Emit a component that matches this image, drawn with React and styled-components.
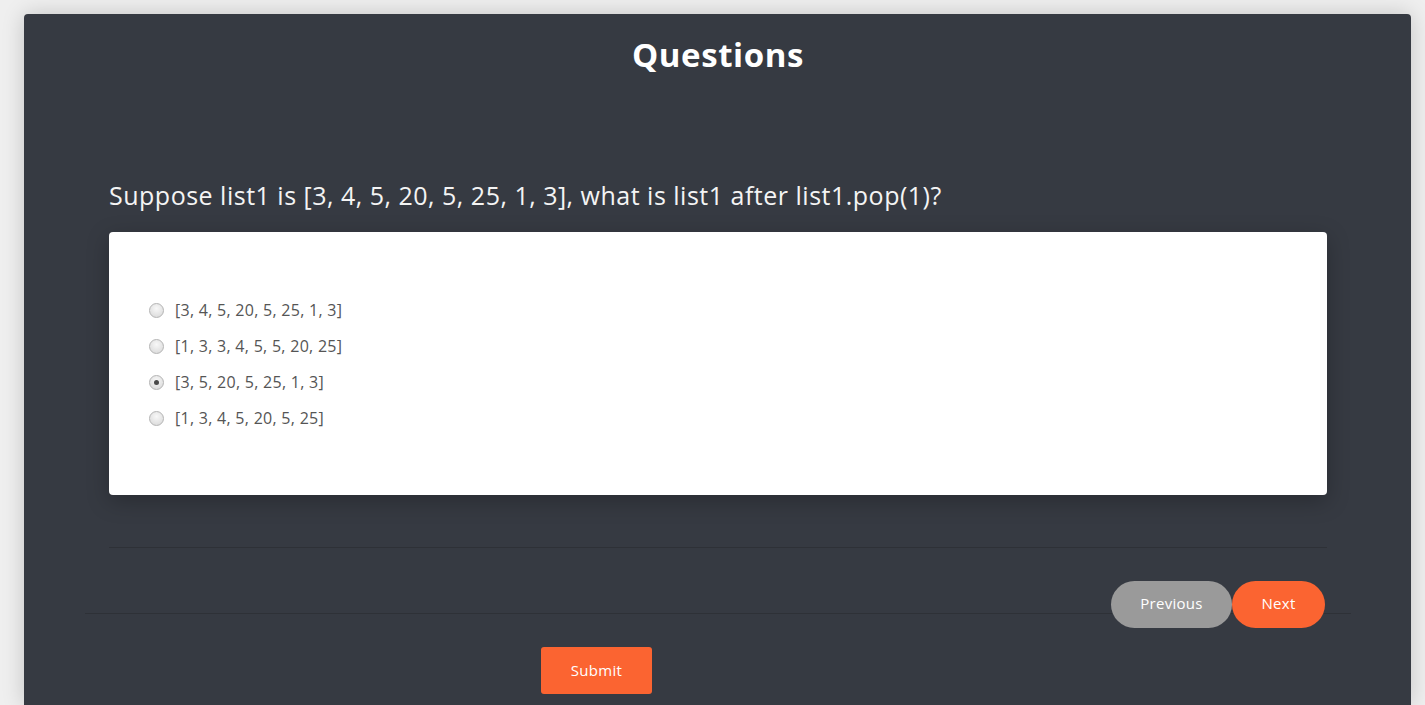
import React, { useState } from 'react';
import styled, { createGlobalStyle } from 'styled-components';

const GlobalStyle = createGlobalStyle`
  html, body {
    margin: 0;
    padding: 0;
    background: #efefef;
    font-family: "Open Sans", "Liberation Sans", sans-serif;
    overflow: hidden;
  }
`;

const Page = styled.div`
  padding: 14px 14px 0 24px;
  height: 705px;
  box-sizing: border-box;
`;

const Card = styled.div`
  background: #363a42;
  border-radius: 4px 4px 0 0;
  box-shadow: 0 0 22px rgba(0, 0, 0, 0.18);
  padding: 0 60px 40px 61px;
  height: 100%;
  box-sizing: border-box;
`;

const Title = styled.h1`
  margin: 0;
  padding: 19px 0 0;
  text-align: center;
  color: #fff;
  font-size: 33px;
  line-height: 44px;
  font-weight: 700;
  letter-spacing: 0.6px;
`;

const Body = styled.div`
  padding: 0 24px;
`;

const Question = styled.h3`
  margin: 103px 0 22px;
  color: #f4f4f4;
  font-size: 25px;
  line-height: 30px;
  font-weight: 400;
  letter-spacing: 0.5px;
`;

const AnswerBox = styled.div`
  background: #fff;
  border-radius: 4px;
  box-shadow: 0 6px 22px rgba(0, 0, 0, 0.25);
  padding: 60px 40px 59px;
`;

const Option = styled.label`
  display: flex;
  align-items: center;
  height: 36px;
  color: #555;
  font-size: 16px;
  letter-spacing: 0.28px;
  cursor: pointer;
`;

const Radio = styled.span`
  width: 13px;
  height: 13px;
  border-radius: 50%;
  border: 1px solid #b4b4b4;
  background: radial-gradient(circle at 50% 35%, #f8f8f8, #d6d6d6);
  margin-right: 11px;
  display: flex;
  align-items: center;
  justify-content: center;
  &::after {
    content: '';
    width: 5px;
    height: 5px;
    border-radius: 50%;
    background: #4a4a4a;
    display: ${({ checked }) => (checked ? 'block' : 'none')};
  }
`;

const Rule = styled.div`
  height: 1px;
  background: #2e3137;
  margin: ${({ m }) => m};
`;

const NavRow = styled.div`
  display: flex;
  justify-content: flex-end;
  padding: 0 26px 0 0;
`;

const NavButton = styled.button`
  position: relative;
  z-index: 1;
  height: 47px;
  width: ${({ w }) => w}px;
  border: none;
  border-radius: 24px;
  background: ${({ bg }) => bg};
  color: #fff;
  font-family: inherit;
  font-size: 15px;
  line-height: 1;
  padding-bottom: 3px;
  letter-spacing: 0.3px;
  cursor: pointer;
`;

const SubmitButton = styled.button`
  margin: 33px 0 0 456px;
  width: 111px;
  height: 47px;
  border: none;
  border-radius: 3px;
  background: #fb6431;
  color: #fff;
  font-family: inherit;
  font-size: 15px;
  line-height: 1;
  padding-bottom: 2px;
  letter-spacing: 0.3px;
  cursor: pointer;
`;

const options = [
  '[3, 4, 5, 20, 5, 25, 1, 3]',
  '[1, 3, 3, 4, 5, 5, 20, 25]',
  '[3, 5, 20, 5, 25, 1, 3]',
  '[1, 3, 4, 5, 20, 5, 25]',
];

export default function App() {
  const [picked, setPicked] = useState(2);
  return (
    <Page>
      <GlobalStyle />
      <Card>
        <Title>Questions</Title>
        <Body>
          <Question>Suppose list1 is [3, 4, 5, 20, 5, 25, 1, 3], what is list1 after list1.pop(1)?</Question>
          <AnswerBox>
            {options.map((o, i) => (
              <Option key={i} onClick={() => setPicked(i)}>
                <Radio checked={picked === i} />
                {o}
              </Option>
            ))}
          </AnswerBox>
          <Rule m="52px 0 33px" />
        </Body>
        <NavRow>
          <NavButton w={121} bg="#9a9a9a">Previous</NavButton>
          <NavButton w={93} bg="#fb6431">Next</NavButton>
        </NavRow>
        <Rule m="-15px 0 0" />
        <SubmitButton>Submit</SubmitButton>
      </Card>
    </Page>
  );
}
